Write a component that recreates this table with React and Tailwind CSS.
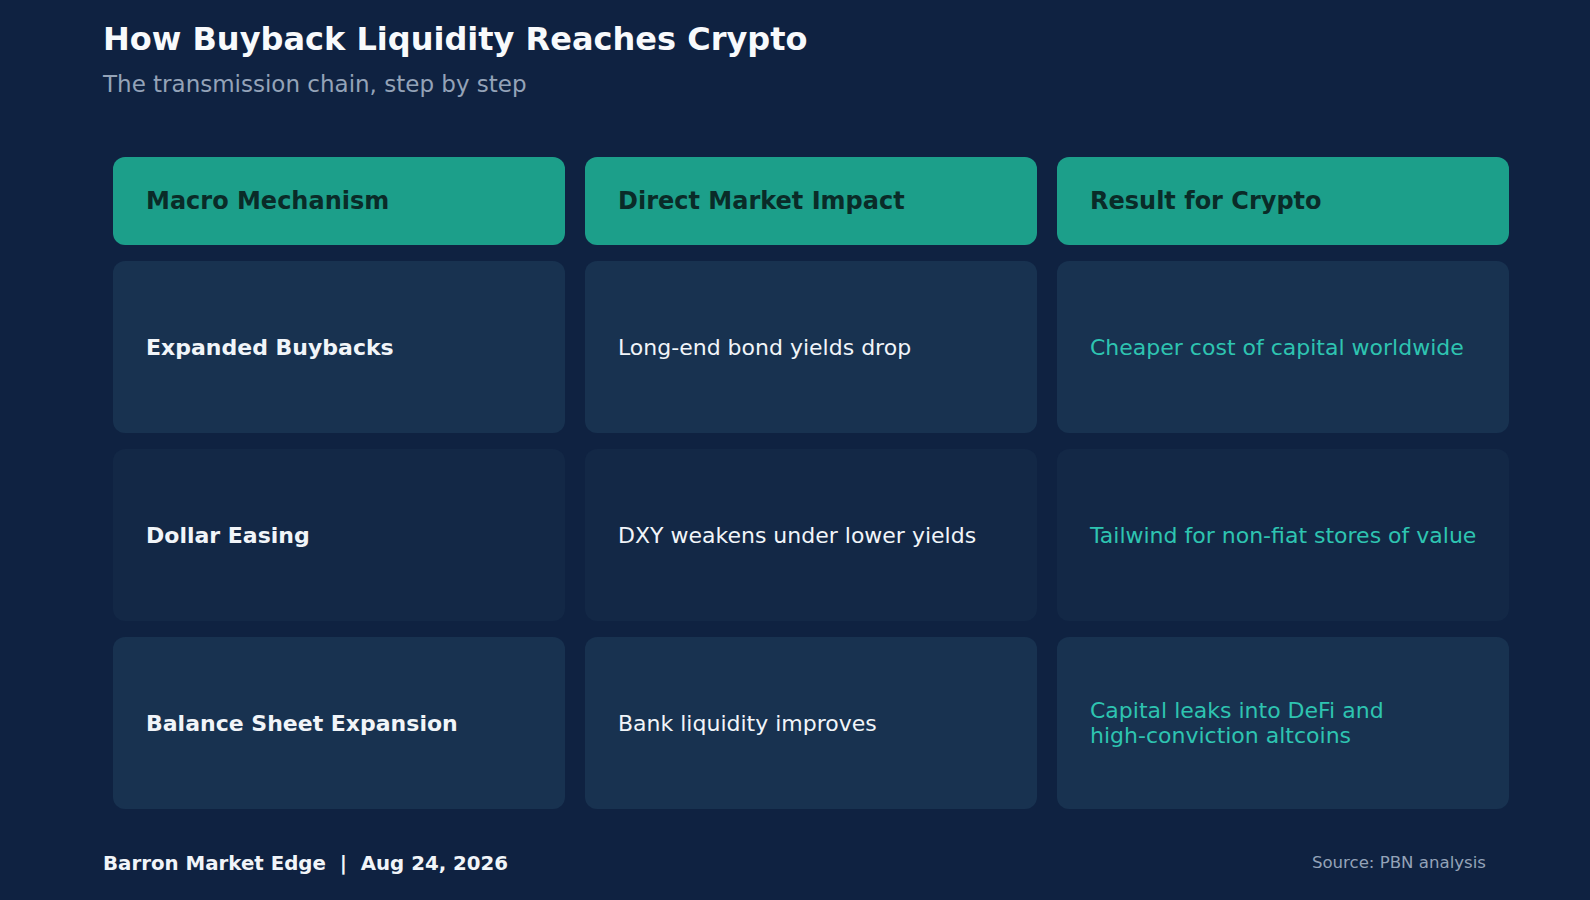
import React from "react";

const rows = [
  {
    a: "Expanded Buybacks",
    b: "Long-end bond yields drop",
    c: "Cheaper cost of capital worldwide",
    bg: "bg-[#183250]",
  },
  {
    a: "Dollar Easing",
    b: "DXY weakens under lower yields",
    c: "Tailwind for non-fiat stores of value",
    bg: "bg-[#132846]",
  },
  {
    a: "Balance Sheet Expansion",
    b: "Bank liquidity improves",
    c: (
      <>
        Capital leaks into DeFi and
        <br />
        high-conviction altcoins
      </>
    ),
    bg: "bg-[#183250]",
  },
];

export default function App() {
  return (
    <div
      className="w-[1590px] h-[900px] bg-[#0f2241] overflow-hidden flex flex-col"
      style={{ fontFamily: '"DejaVu Sans", Verdana, sans-serif' }}
    >
      <div className="pl-[103px] pt-[19px]">
        <h1 className="text-[32px] leading-[40px] font-bold text-[#f8fafc]">
          How Buyback Liquidity Reaches Crypto
        </h1>
        <p className="mt-[10px] text-[23px] leading-[30px] text-[#94a3b8]">
          The transmission chain, step by step
        </p>
      </div>

      <div className="ml-[113px] w-[1396px] mt-[58px] grid grid-cols-3 gap-x-[20px] gap-y-[16px]">
        {["Macro Mechanism", "Direct Market Impact", "Result for Crypto"].map((h) => (
          <div
            key={h}
            className="h-[88px] rounded-[12px] bg-[#1c9f8a] flex items-center pl-[33px] pr-[16px]"
          >
            <span className="text-[24px] font-bold text-[#0a2b28]">{h}</span>
          </div>
        ))}
        {rows.map((r, i) => (
          <React.Fragment key={i}>
            <div className={`h-[172px] rounded-[12px] ${r.bg} flex items-center pl-[33px] pr-[16px]`}>
              <span className="text-[22px] font-bold text-[#f1f5f9]">{r.a}</span>
            </div>
            <div className={`h-[172px] rounded-[12px] ${r.bg} flex items-center pl-[33px] pr-[16px]`}>
              <span className="text-[22px] text-[#f1f5f9]">{r.b}</span>
            </div>
            <div className={`h-[172px] rounded-[12px] ${r.bg} flex items-center pl-[33px] pr-[16px]`}>
              <span className="text-[22px] leading-[25px] text-[#2ec4b1]">{r.c}</span>
            </div>
          </React.Fragment>
        ))}
      </div>

      <div className="mt-[40px] pl-[103px] w-[1486px] flex items-center justify-between">
        <span className="text-[19.8px] font-bold text-[#f1f5f9] whitespace-pre">
          Barron Market Edge  |  Aug 24, 2026
        </span>
        <span className="text-[16.6px] text-[#94a3b8]">Source: PBN analysis</span>
      </div>
    </div>
  );
}
